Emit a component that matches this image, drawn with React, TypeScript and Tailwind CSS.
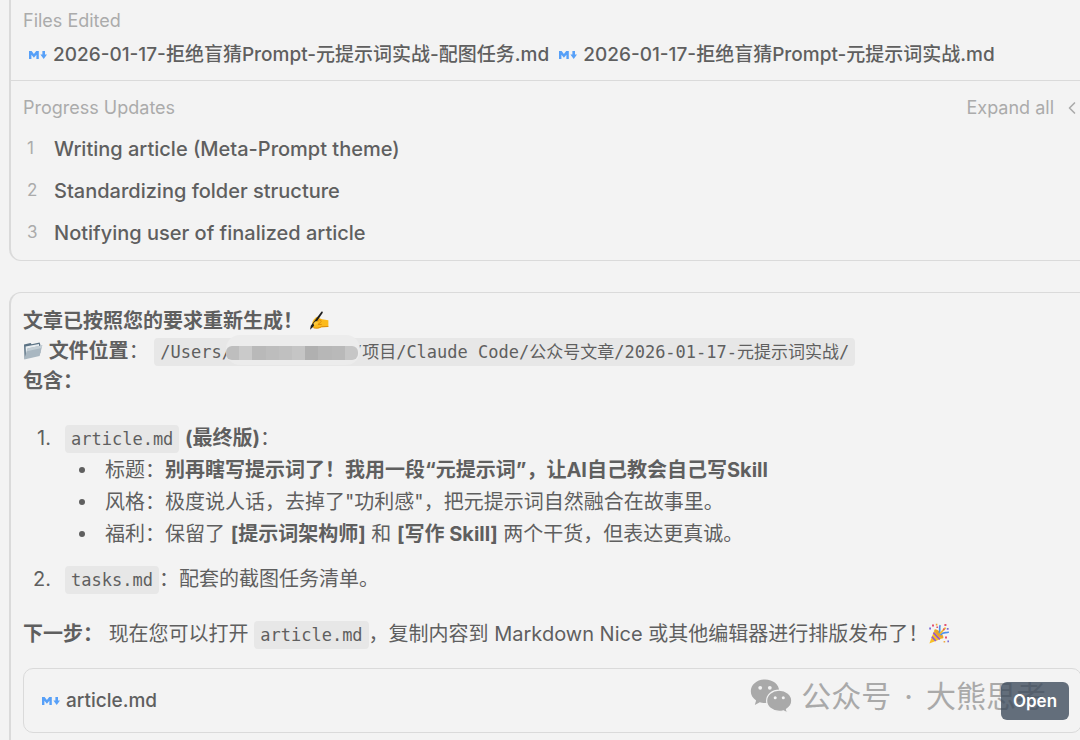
import type { ReactNode } from 'react';
import { ChevronLeft } from 'lucide-react';

const FILES = [
  '2026-01-17-拒绝盲猜Prompt-元提示词实战-配图任务.md',
  '2026-01-17-拒绝盲猜Prompt-元提示词实战.md',
];

const UPDATES = [
  'Writing article (Meta-Prompt theme)',
  'Standardizing folder structure',
  'Notifying user of finalized article',
];

// colours of the redacted user name, left to right
const MOSAIC = [
  'bg-[#bebebe]',
  'bg-[#cacaca]',
  'bg-[#b9b9b9]',
  'bg-[#bdbdbd]',
  'bg-[#c0c0c0]',
  'bg-[#c5c5c5]',
  'bg-[#b0b0b0]',
  'bg-[#b7b7b7]',
  'bg-[#b9b9b9]',
  'bg-[#c6c6c6]',
];

function MarkdownIcon() {
  return (
    <svg viewBox="0 0 18 10" className="h-[10px] w-[18px] shrink-0 text-[#57a0f8]" fill="currentColor" aria-hidden="true">
      <path d="M0 9V1h2.6l2.3 3.1L7.2 1h2.6v8H7.4V4.7L4.9 7.8 2.4 4.700V9z" />
      <path d="M13.400 1h2.600v3.600H18L14.700 9 11.400 4.600h2z" />
    </svg>
  );
}

function WritingHand() {
  return (
    <svg viewBox="0 0 22 22" className="inline-block size-[20px] align-[-3px]" role="img" aria-label="writing hand">
      <path d="M3.5 15.5C3 12 5.500 8 8.500 6.500c1.500-.7 3.300.2 3 1.600l3 1 6.800 1.200v7.200l-7.600.4c-2 1.300-5 1.600-7 1.200-2-.3-3.500-1.300-3.200-3.600z" fill="#fcba1b" />
      <path d="M7 12.500c2-.5 3.600-1.700 5-3.200l1.600 2.200-3.600 3.300h4M5 18.500c3 .8 6 .3 8.800-1.200l7.400-.3" fill="none" stroke="#d98a0b" strokeWidth="1" />
      <path d="M13.600.8c1-.6 2 .3 1.400 1.300L4.600 17.400 1.200 20.600l.8-4.400z" fill="#1d1d1f" />
      <path d="M4.800 13.800c1.600-2.400 3-2.800 4.600-2.300l.6 1.900-4.200 2.800z" fill="#fdc93a" />
    </svg>
  );
}

function FolderIcon() {
  return (
    <svg viewBox="0 0 20 20" className="inline-block size-[20px] align-[-3px]" role="img" aria-label="open folder">
      <path d="M1 3.600 7.600 2l1 1.200 8-1.600.7 2V12L1.600 18z" fill="#5b7284" />
      <path d="M2.600 5.600 16 3v8L3 16z" fill="#e8edf0" />
      <path d="M4.400 7.600 19.300 4.200 16.600 15 1.200 18.400z" fill="#a9b7c1" />
      <path d="M4.400 7.600 19.300 4.200 18.600 7 3.900 10.200z" fill="#c3ced5" />
    </svg>
  );
}

function PartyPopper() {
  return (
    <svg viewBox="0 0 22 22" className="inline-block size-[22px] align-[-4px]" role="img" aria-label="party popper">
      <path d="M6.600 6.600 15.200 15 1.400 20.600z" fill="#f8c024" />
      <path d="M5.400 9.600 11.800 16.400M3.800 13.600 7.800 18" stroke="#9a5ac8" strokeWidth="1.700" />
      <ellipse cx="11" cy="10.800" rx="2" ry="6" transform="rotate(-45 11 10.800)" fill="#e8a42a" />
      <path d="M11 10C13 7.600 10.600 5 12.200 2.200M12.600 12c2.400-3.400 5-1.600 8.200-3" fill="none" stroke="#4d91ea" strokeWidth="1.700" />
      <path d="M12 10.600 17.600 4.600" stroke="#f3bb30" strokeWidth="1.600" />
      <path d="M4 1.400h2v2H4zM16.400 1h2v2h-2zM17 13.600h2v2h-2zM8.400 3.400h1.600v1.600H8.400zM15 5.600h1.600v1.600H15z" fill="#e35170" />
      <path d="M1.200 4.600h1.800v1.800H1.200zM18.800 5h1.800v1.800h-1.800zM19.400 17.600h1.600v1.600h-1.600z" fill="#7c6bd6" />
      <path d="M7.800.8h1.600v1.600H7.800zM15.600 18h1.600v1.600h-1.600z" fill="#f0a63b" />
    </svg>
  );
}

function WeChatLogo() {
  return (
    <svg viewBox="0 0 42 34" className="h-[34px] w-[42px]" aria-hidden="true">
      <path d="M15 .5C7 .5.8 5.700.8 12.200c0 3.800 2 7 5.300 9.200L4.800 26l5-2.700c1.700.5 3.300.7 5.200.7 8 0 14.200-5.200 14.200-11.800S23 .5 15 .5z" fill="#a9a9a9" />
      <path d="M29.200 11.200c-7 0-12.600 4.700-12.600 10.600s5.600 10.600 12.600 10.600c1.500 0 3-.2 4.300-.6l4.100 2.200-1.100-3.700c3.200-2 5.300-5 5.300-8.500 0-5.900-5.600-10.600-12.600-10.600z" fill="#a9a9a9" stroke="#f3f3f3" strokeWidth="1.200" />
      <g fill="#f3f3f3">
        <circle cx="10.200" cy="8.800" r="1.900" />
        <circle cx="19.800" cy="8.800" r="1.900" />
        <circle cx="25.200" cy="18.700" r="1.500" />
        <circle cx="33.300" cy="18.700" r="1.500" />
      </g>
    </svg>
  );
}

function Code({ children }: { children: ReactNode }) {
  return (
    <code className="rounded-[4px] bg-[#e7e7e7] px-[6px] py-1 font-['DejaVu_Sans_Mono','Noto_Sans_CJK_SC',monospace] text-[17px] leading-[20px]">
      {children}
    </code>
  );
}

function RedactedName() {
  return (
    <span className="relative -mr-[6px] -ml-[6px] inline-block h-[14px] w-[132px] align-[-2px]">
      <span className="absolute -top-[11px] -right-[2px] -bottom-[5px] left-0 rounded-[14px] bg-[#ececec]" />
      <span className="absolute inset-0 flex overflow-hidden rounded-[6px]">
        {MOSAIC.map((color, i) => (
          <span key={i} className={`flex-1 ${color}`} />
        ))}
      </span>
    </span>
  );
}

function Bullet({ children }: { children: ReactNode }) {
  return (
    <li className="flex items-center gap-5 pl-[14px]">
      <span className="size-[6px] shrink-0 rounded-full bg-[#5f5f5f]" />
      <span>{children}</span>
    </li>
  );
}

export default function App() {
  return (
    <div className="min-h-screen overflow-hidden bg-[#f3f3f3] pl-[9px] font-['Inter','Noto_Sans_CJK_SC',sans-serif] text-[#5f5f5f]">
      <main className="-mr-[14px]">
        {/* Task summary */}
        <section className="rounded-b-[12px] border-b border-l-2 border-[#dadada]">
          <div className="border-b border-[#dadada] px-3 pt-[9px] pb-[13px]">
            <h2 className="text-[18px] leading-6 text-[#ababab]">Files Edited</h2>
            <ul className="mt-[10px] flex gap-[10px] pl-[6px]">
              {FILES.map((name) => (
                <li key={name}>
                  <a href="#" className="flex items-center gap-[6px] text-[19px] leading-6 font-medium whitespace-nowrap">
                    <MarkdownIcon />
                    {name}
                  </a>
                </li>
              ))}
            </ul>
          </div>

          <div className="px-3 pt-[15px] pb-[6px]">
            <div className="flex items-center justify-between text-[18px] leading-6 text-[#ababab]">
              <h2>Progress Updates</h2>
              <button type="button" className="flex items-center gap-2">
                Expand all
                <ChevronLeft className="size-[20px]" strokeWidth={2} />
              </button>
            </div>
            <ol className="mt-2">
              {UPDATES.map((title, i) => (
                <li key={title} className="flex h-[42px] items-center">
                  <span className="w-[31px] pl-1 text-[17px] text-[#ababab]">{i + 1}</span>
                  <span className="text-[20px] font-medium">{title}</span>
                </li>
              ))}
            </ol>
          </div>
        </section>

        {/* Reply */}
        <section className="mt-[31px] rounded-t-[12px] border-t border-l-2 border-[#dadada] px-3 pt-[13px] pb-2 text-[20px] leading-[30px]">
          <p>
            <strong>文章已按照您的要求重新生成！</strong> <WritingHand />
            <br />
            <FolderIcon /> <strong>文件位置</strong>：{' '}
            <Code>
              /Users/
              <RedactedName />
              /项目/Claude Code/公众号文章/2026-01-17-元提示词实战/
            </Code>
            <br />
            <strong>包含：</strong>
          </p>

          <ol className="mt-[26px] leading-8">
            <li className="flex">
              <span className="w-[42px] pr-[14px] text-right">1.</span>
              <div>
                <Code>article.md</Code> <strong>(最终版)</strong>：
                <ul>
                  <Bullet>
                    标题：<strong>别再瞎写提示词了！我用一段“元提示词”，让AI自己教会自己写Skill</strong>
                  </Bullet>
                  <Bullet>风格：极度说人话，去掉了"功利感"，把元提示词自然融合在故事里。</Bullet>
                  <Bullet>
                    福利：保留了 <strong>[提示词架构师]</strong> 和 <strong>[写作 Skill]</strong> 两个干货，但表达更真诚。
                  </Bullet>
                </ul>
              </div>
            </li>
            <li className="mt-[13px] flex">
              <span className="w-[42px] pr-[14px] text-right">2.</span>
              <div>
                <Code>tasks.md</Code>：配套的截图任务清单。
              </div>
            </li>
          </ol>

          <p className="mt-6">
            <strong>下一步：</strong> 现在您可以打开 <Code>article.md</Code>，复制内容到 Markdown Nice 或其他编辑器进行排版发布了！
            <PartyPopper />
          </p>

          <div className="relative mt-[19px] flex h-[65px] items-center justify-between rounded-[10px] border border-[#dadada] pr-3 pl-[18px]">
            <a href="#" className="flex items-center gap-[6px] text-[19px] font-medium">
              <MarkdownIcon />
              article.md
            </a>
            <div className="pointer-events-none absolute top-[10px] right-[35px] flex items-center gap-[9px] text-[30px] leading-[34px] text-[#a9a9a9]">
              <WeChatLogo />
              <span className="flex gap-[13px]">
                <span>公众号</span>
                <span>·</span>
                <span>大熊思考</span>
              </span>
            </div>
            <button type="button" className="relative h-[38px] w-[68px] rounded-[6px] bg-[#3e4c5d]/80 text-[17px] font-semibold text-white">
              Open
            </button>
          </div>
        </section>
      </main>
    </div>
  );
}
